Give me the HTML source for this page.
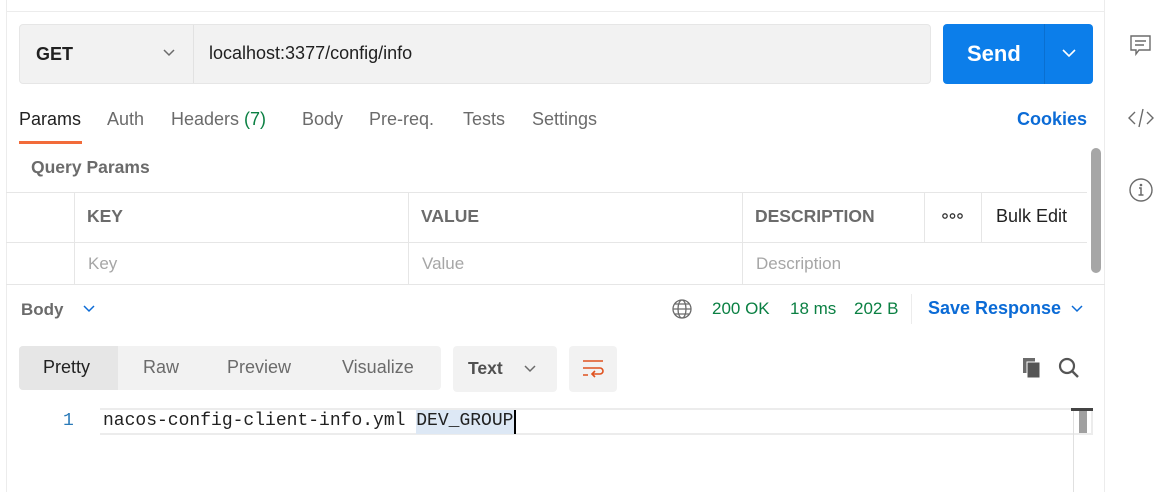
<!DOCTYPE html>
<html><head><style>
*{margin:0;padding:0;box-sizing:border-box}
body{width:1157px;height:492px;background:#fff;font-family:"Liberation Sans",sans-serif;position:relative;overflow:hidden;color:#212121}
.a{position:absolute}
.tab{position:absolute;top:109px;font-size:18px;color:#6b6b6b}
.th{position:absolute;top:206px;font-size:17.5px;font-weight:bold;color:#6b6b6b}
.ph{position:absolute;top:254px;font-size:17px;color:#a6a6a6}
</style></head><body>
<div class="a" style="left:6px;top:0;width:1px;height:492px;background:#ececec"></div>
<div class="a" style="left:6px;top:11px;width:1099px;height:1px;background:#ececec"></div>
<div class="a" style="left:1104px;top:0;width:1px;height:492px;background:#ececec"></div>
<div class="a" style="left:19px;top:24px;width:912px;height:60px;background:#f2f2f2;border:1px solid #e6e6e6;border-radius:4px"></div>
<div class="a" style="left:193px;top:25px;width:1px;height:58px;background:#e2e2e2"></div>
<div class="a" style="left:36px;top:44px;font-size:18px;font-weight:bold;color:#212121">GET</div>
<svg class="a" style="left:162px;top:48px" width="14" height="10"><path d="M2 2l5 5 5-5" fill="none" stroke="#6b6b6b" stroke-width="1.5"/></svg>
<div class="a" style="left:209px;top:43px;font-size:18px;color:#212121">localhost:3377/config/info</div>
<div class="a" style="left:943px;top:24px;width:150px;height:60px;background:#0c7eea;border-radius:4px"></div>
<div class="a" style="left:1044px;top:24px;width:1px;height:60px;background:#0a6fd0"></div>
<div class="a" style="left:967px;top:41px;font-size:22px;font-weight:bold;color:#fff">Send</div>
<svg class="a" style="left:1061px;top:48px" width="16" height="10"><path d="M2 2l6 6 6-6" fill="none" stroke="#fff" stroke-width="1.6"/></svg>
<svg class="a" style="left:1129px;top:33px" width="24" height="26"><path d="M2 3h19v14H10l-3 4v-4H2z" fill="none" stroke="#6b6b6b" stroke-width="1.4"/><path d="M6 8h11M6 12h9" stroke="#6b6b6b" stroke-width="1.4"/></svg>
<svg class="a" style="left:1127px;top:106px" width="28" height="24"><path d="M8 6l-6 6 6 6M20 6l6 6-6 6M16 3l-4 18" fill="none" stroke="#6b6b6b" stroke-width="1.4"/></svg>
<svg class="a" style="left:1128px;top:177px" width="26" height="26"><circle cx="13" cy="13" r="11" fill="none" stroke="#6b6b6b" stroke-width="1.4"/><circle cx="13" cy="8" r="1.3" fill="#6b6b6b"/><path d="M11 11h2v7M10.5 18h5" fill="none" stroke="#6b6b6b" stroke-width="1.5"/></svg>
<div class="tab" style="left:19px;color:#212121">Params</div>
<div class="tab" style="left:107px">Auth</div>
<div class="tab" style="left:171px">Headers <span style="color:#0b8043">(7)</span></div>
<div class="tab" style="left:302px">Body</div>
<div class="tab" style="left:369px">Pre-req.</div>
<div class="tab" style="left:463px">Tests</div>
<div class="tab" style="left:532px">Settings</div>
<div class="tab" style="left:1017px;color:#0b6bd6;font-weight:bold">Cookies</div>
<div class="a" style="left:19px;top:141px;width:63px;height:3px;background:#f26b3a"></div>
<div class="a" style="left:31px;top:157px;font-size:17.5px;font-weight:bold;color:#6b6b6b">Query Params</div>
<div class="a" style="left:6px;top:192px;width:1081px;height:1px;background:#e6e6e6"></div>
<div class="a" style="left:6px;top:242px;width:1081px;height:1px;background:#e6e6e6"></div>
<div class="a" style="left:6px;top:284px;width:1099px;height:1px;background:#e6e6e6"></div>
<div class="a" style="left:74px;top:192px;width:1px;height:92px;background:#e6e6e6"></div>
<div class="a" style="left:408px;top:192px;width:1px;height:92px;background:#e6e6e6"></div>
<div class="a" style="left:742px;top:192px;width:1px;height:92px;background:#e6e6e6"></div>
<div class="a" style="left:924px;top:192px;width:1px;height:50px;background:#e6e6e6"></div>
<div class="a" style="left:981px;top:192px;width:1px;height:50px;background:#e6e6e6"></div>
<div class="th" style="left:87px">KEY</div>
<div class="th" style="left:421px">VALUE</div>
<div class="th" style="left:755px">DESCRIPTION</div>
<svg class="a" style="left:942px;top:212px" width="22" height="8"><circle cx="3" cy="4" r="2.2" fill="none" stroke="#333" stroke-width="1.3"/><circle cx="10.5" cy="4" r="2.2" fill="none" stroke="#333" stroke-width="1.3"/><circle cx="18" cy="4" r="2.2" fill="none" stroke="#333" stroke-width="1.3"/></svg>
<div class="a" style="left:996px;top:206px;font-size:18px;color:#212121">Bulk Edit</div>
<div class="ph" style="left:88px">Key</div>
<div class="ph" style="left:422px">Value</div>
<div class="ph" style="left:756px">Description</div>
<div class="a" style="left:1091px;top:148px;width:10px;height:125px;background:#a6a6a6;border-radius:5px"></div>
<div class="a" style="left:21px;top:300px;font-size:17px;font-weight:bold;color:#6b6b6b">Body</div>
<svg class="a" style="left:82px;top:304px" width="14" height="10"><path d="M2 2l5 5 5-5" fill="none" stroke="#0b6bd6" stroke-width="1.5"/></svg>
<svg class="a" style="left:671px;top:298px" width="22" height="22"><circle cx="11" cy="11" r="9" fill="none" stroke="#6b6b6b" stroke-width="1.3"/><ellipse cx="11" cy="11" rx="4" ry="9" fill="none" stroke="#6b6b6b" stroke-width="1.3"/><path d="M2 11h18M4 6h14M4 16h14" stroke="#6b6b6b" stroke-width="1.2"/></svg>
<div class="a" style="left:712px;top:299px;font-size:17px;color:#0b8043">200 OK</div>
<div class="a" style="left:790px;top:299px;font-size:17px;color:#0b8043">18 ms</div>
<div class="a" style="left:854px;top:299px;font-size:17px;color:#0b8043">202 B</div>
<div class="a" style="left:911px;top:294px;width:1px;height:30px;background:#ececec"></div>
<div class="a" style="left:928px;top:298px;font-size:18px;font-weight:bold;color:#0b6bd6">Save Response</div>
<svg class="a" style="left:1070px;top:304px" width="14" height="10"><path d="M2 2l5 5 5-5" fill="none" stroke="#0b6bd6" stroke-width="1.5"/></svg>
<div class="a" style="left:19px;top:346px;width:422px;height:44px;background:#f2f2f2;border-radius:4px"></div>
<div class="a" style="left:19px;top:346px;width:99px;height:44px;background:#e6e6e6;border-radius:4px 0 0 4px"></div>
<div class="a" style="left:43px;top:357px;font-size:18px;color:#212121">Pretty</div>
<div class="a" style="left:143px;top:357px;font-size:18px;color:#6b6b6b">Raw</div>
<div class="a" style="left:227px;top:357px;font-size:18px;color:#6b6b6b">Preview</div>
<div class="a" style="left:342px;top:357px;font-size:18px;color:#6b6b6b">Visualize</div>
<div class="a" style="left:453px;top:346px;width:104px;height:46px;background:#f2f2f2;border-radius:4px"></div>
<div class="a" style="left:468px;top:358px;font-size:17.5px;font-weight:bold;color:#505050">Text</div>
<svg class="a" style="left:523px;top:364px" width="14" height="10"><path d="M2 2l5 5 5-5" fill="none" stroke="#6b6b6b" stroke-width="1.5"/></svg>
<div class="a" style="left:569px;top:346px;width:48px;height:46px;background:#f2f2f2;border-radius:4px"></div>
<svg class="a" style="left:581px;top:358px" width="24" height="22"><path d="M2 3h20M2 10h17a3 3 0 0 1 0 6h-7M2 17h5" fill="none" stroke="#e0521f" stroke-width="1.6"/><path d="M14 13l-3 3 3 3" fill="none" stroke="#e0521f" stroke-width="1.6"/></svg>
<svg class="a" style="left:1021px;top:356px" width="24" height="24"><rect x="2" y="2" width="12" height="15" fill="#6b6b6b"/><rect x="6" y="6" width="13" height="16" fill="#555" stroke="#fff" stroke-width="1"/></svg>
<svg class="a" style="left:1057px;top:356px" width="24" height="24"><circle cx="10" cy="10" r="7" fill="none" stroke="#555" stroke-width="2.2"/><path d="M15 15l6 6" stroke="#555" stroke-width="2.4"/></svg>
<div class="a" style="left:100px;top:408px;width:993px;height:27px;border:2px solid #ececec;border-left:none"></div>
<div class="a" style="left:416px;top:410px;width:98px;height:24px;background:#dde8f5"></div>
<div class="a" style="left:63px;top:411px;font-family:'Liberation Mono',monospace;font-size:18px;color:#2a7ab8">1</div>
<div class="a" style="left:103px;top:411px;font-family:'Liberation Mono',monospace;font-size:18px;color:#212121">nacos-config-client-info.yml DEV_GROUP</div>
<div class="a" style="left:514px;top:410px;width:2px;height:24px;background:#000"></div>
<div class="a" style="left:1073px;top:410px;width:1px;height:82px;background:#e0e0e0"></div>
<div class="a" style="left:1071px;top:408px;width:22px;height:3px;background:#444"></div>
<div class="a" style="left:1079px;top:411px;width:8px;height:22px;background:#a0a0a0"></div>
</body></html>
